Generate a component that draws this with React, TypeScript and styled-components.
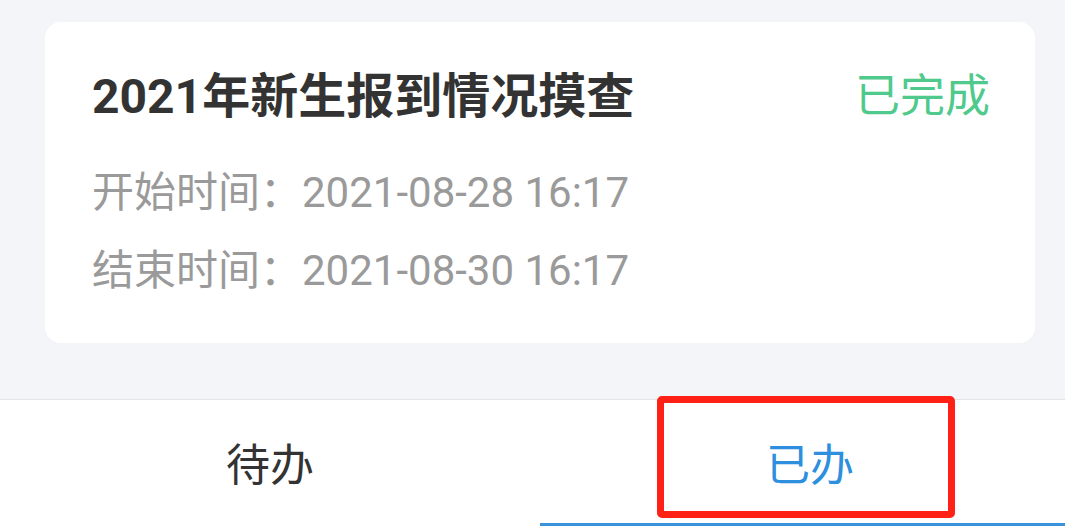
import React from 'react'
import styled, { createGlobalStyle } from 'styled-components'

const GlobalStyle = createGlobalStyle`
  html, body {
    margin: 0;
    padding: 0;
    overflow: hidden;
    background: #f4f5f9;
  }
  body {
    font-family: Roboto, "Noto Sans CJK SC", sans-serif;
  }
`

const Screen = styled.div`
  width: 1080px;
  height: 526px;
  display: flex;
  flex-direction: column;
  background: #f4f5f9;
`

const List = styled.div`
  flex: 1;
  padding: 22px 45px 0;
`

const Card = styled.div`
  background: #fff;
  border-radius: 16px;
  padding: 47px 45px 33px 47px;
`

const TitleRow = styled.div`
  display: flex;
  justify-content: space-between;
  align-items: center;
  height: 56px;
  margin-bottom: 29px;
`

const Title = styled.div`
  font-size: 48px;
  font-weight: 700;
  color: #333;
  line-height: 56px;
`

const Status = styled.div`
  font-size: 45px;
  color: #4fca8c;
  line-height: 56px;
`

const InfoLine = styled.div`
  font-size: 42px;
  color: #9a9a9a;
  line-height: 78px;
`

const TabBar = styled.div`
  height: 126px;
  border-top: 1px solid #e4e4e4;
  background: #fff;
  display: flex;
`

const Tab = styled.div<{ $active?: boolean }>`
  position: relative;
  flex: 1;
  display: flex;
  align-items: center;
  justify-content: center;
  font-size: 44px;
  color: ${({ $active }) => ($active ? '#2d8fdd' : '#333')};
  border-bottom: 3px solid ${({ $active }) => ($active ? '#3a93da' : 'transparent')};
`

// red annotation frame drawn over the active tab
const Highlight = styled.div`
  position: absolute;
  left: 117px;
  top: -4px;
  width: 298px;
  height: 122px;
  box-sizing: border-box;
  border: 7px solid #ff2016;
  border-radius: 5px;
`

const App: React.FC = () => {
  return (
    <Screen>
      <GlobalStyle />
      <List>
        <Card>
          <TitleRow>
            <Title>2021年新生报到情况摸查</Title>
            <Status>已完成</Status>
          </TitleRow>
          <InfoLine>开始时间：2021-08-28 16:17</InfoLine>
          <InfoLine>结束时间：2021-08-30 16:17</InfoLine>
        </Card>
      </List>
      <TabBar>
        <Tab>待办</Tab>
        <Tab $active>
          已办
          <Highlight />
        </Tab>
      </TabBar>
    </Screen>
  )
}

export default App
